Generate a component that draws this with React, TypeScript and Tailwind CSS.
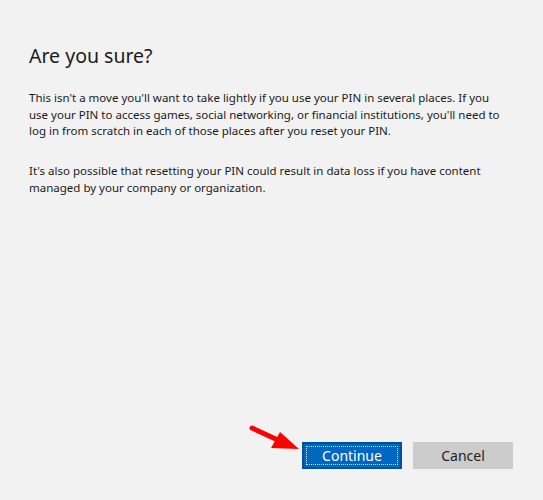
import React from "react";

export default function App() {
  return (
    <div
      className="relative w-[543px] h-[500px] bg-[#f2f2f2] flex flex-col overflow-hidden"
      style={{ fontFamily: '"Noto Sans", "Open Sans", sans-serif' }}
    >
      <div className="pl-[29px] pr-[40px] pt-[42px]">
        <h1 className="text-[19.5px] leading-[28px] text-[#1a1a1a] font-normal">Are you sure?</h1>
        <p className="mt-[20px] text-[11.5px] leading-[16.7px] text-[#1a1a1a]">
          This isn't a move you'll want to take lightly if you use your PIN in several places. If you use your PIN to access games, social networking, or financial institutions, you'll need to log in from scratch in each of those places after you reset your PIN.
        </p>
        <p className="mt-[23px] text-[11.5px] leading-[16.7px] text-[#1a1a1a]">
          It's also possible that resetting your PIN could result in data loss if you have content managed by your company or organization.
        </p>
      </div>
      <div className="mt-auto flex justify-end gap-[11px] pr-[30px] pb-[31px]">
        <button className="w-[100px] h-[27px] bg-[#0067c0] border-2 border-[#0050a0] p-[2px]">
          <span className="flex items-center justify-center w-full h-full border border-dotted border-white/80 text-white text-[14px]">
            Continue
          </span>
        </button>
        <button className="w-[100px] h-[27px] bg-[#cccccc] text-[#222] text-[14px] flex items-center justify-center">
          Cancel
        </button>
      </div>
      <svg className="absolute left-[240px] top-[415px]" width="70" height="45" viewBox="0 0 70 45">
        <line x1="12" y1="13" x2="40" y2="26" stroke="#ff0000" strokeWidth="5" strokeLinecap="round" />
        <polygon points="40,17 59,34 31,33" fill="#ff0000" />
      </svg>
    </div>
  );
}
